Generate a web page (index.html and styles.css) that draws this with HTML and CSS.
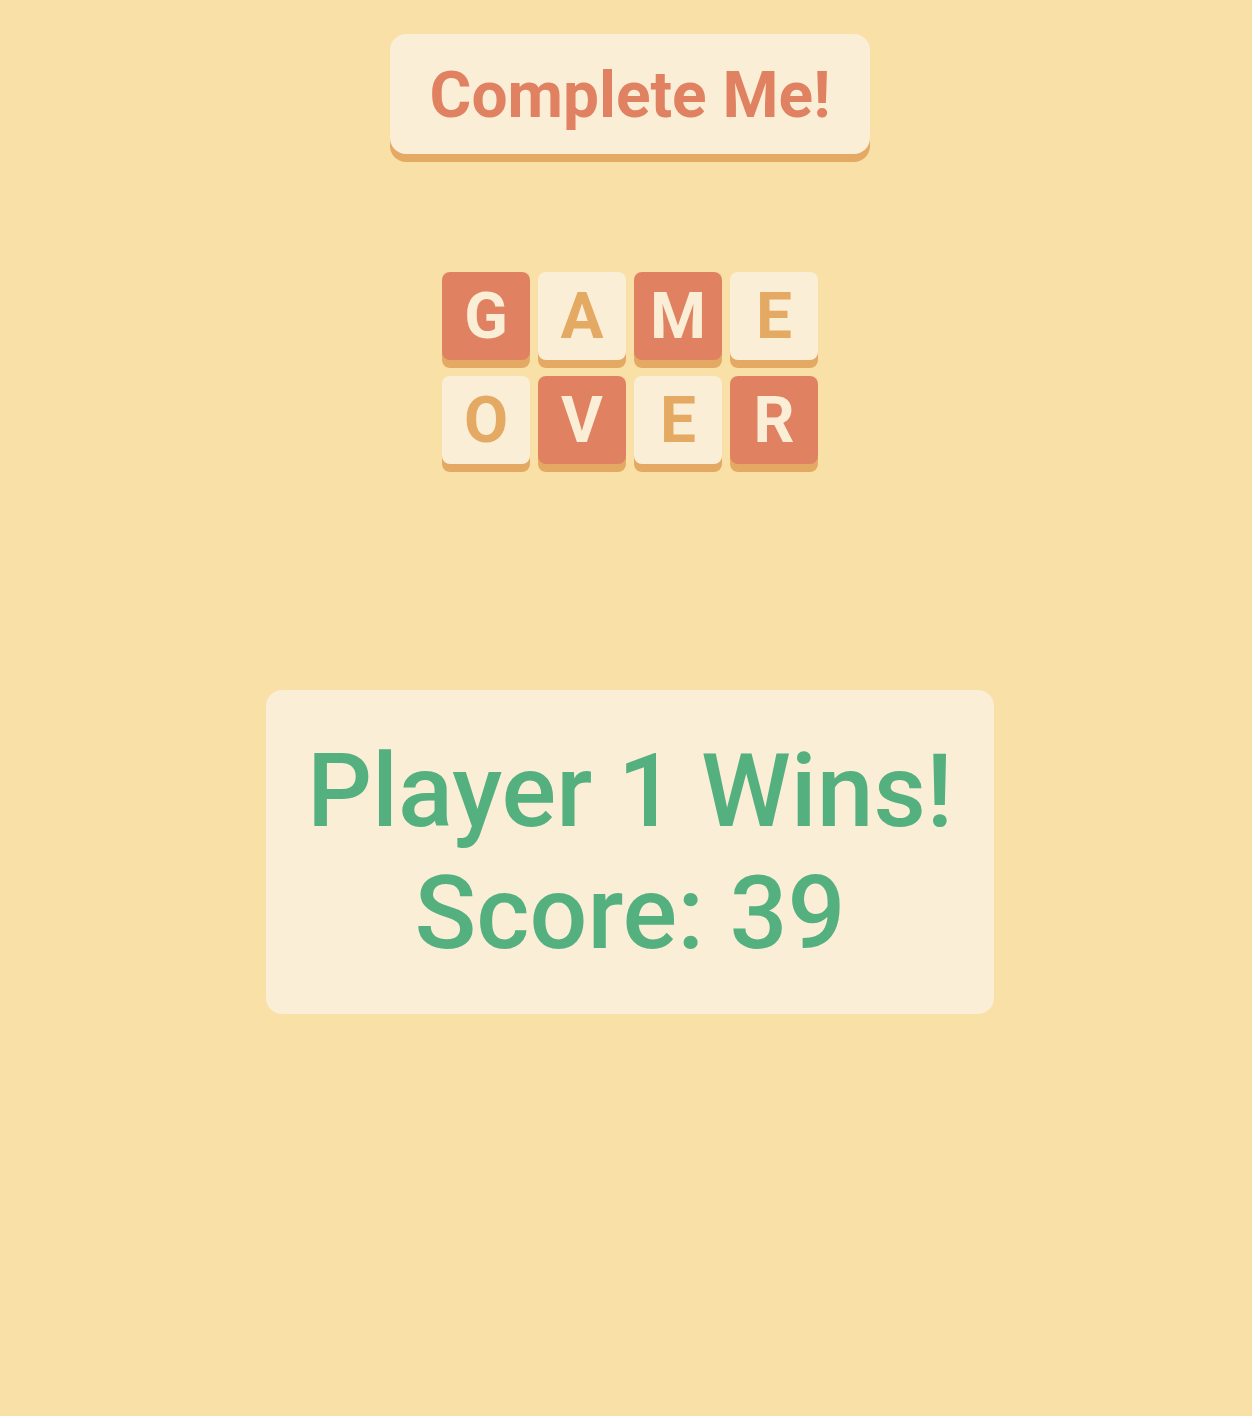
FILE: index.html
```html
<!DOCTYPE html>
<html>
<head>
<meta charset="utf-8">
<link rel="stylesheet" href="styles.css">
</head>
<body>
<main class="page">
  <button class="title-btn">Complete Me!</button>
  <div class="tiles">
    <div class="row">
      <span class="tile dark">G</span>
      <span class="tile light">A</span>
      <span class="tile dark">M</span>
      <span class="tile light">E</span>
    </div>
    <div class="row">
      <span class="tile light">O</span>
      <span class="tile dark">V</span>
      <span class="tile light">E</span>
      <span class="tile dark">R</span>
    </div>
  </div>
  <div class="result">
    <div>Player 1 Wins!</div>
    <div>Score: 39</div>
  </div>
</main>
</body>
</html>
```

FILE: styles.css
```css
html, body {
  margin: 0;
  padding: 0;
  background: #f9e0a6;
  font-family: Roboto, "Liberation Sans", sans-serif;
}

.page {
  display: flex;
  flex-direction: column;
  align-items: center;
  padding-top: 34px;
  padding-left: 8px;
}

.title-btn {
  font-family: Roboto, "Liberation Sans", sans-serif;
  font-weight: 700;
  font-size: 64px;
  line-height: 75px;
  color: #e08262;
  background: #faeed7;
  border: none;
  border-radius: 16px;
  width: 480px;
  height: 120px;
  padding: 3px 0 0;
  box-shadow: 0 8px 0 #e4a963;
  margin: 0;
}

.tiles {
  margin-top: 118px;
  display: flex;
  flex-direction: column;
  gap: 16px;
}

.row {
  display: flex;
  gap: 8px;
}

.tile {
  width: 88px;
  height: 88px;
  border-radius: 8px;
  display: flex;
  align-items: center;
  justify-content: center;
  font-weight: 700;
  font-size: 64px;
  box-shadow: 0 8px 0 #e4a963;
}

.tile.dark {
  background: #e08262;
  color: #faeed7;
}

.tile.light {
  background: #faeed7;
  color: #e4a963;
}

.result {
  margin-top: 226px;
  width: 728px;
  box-sizing: border-box;
  padding: 40px 0;
  background: #faeed7;
  border-radius: 16px;
  text-align: center;
  color: #55b07f;
  font-size: 102px;
  font-weight: 500;
  line-height: 122px;
}
```
